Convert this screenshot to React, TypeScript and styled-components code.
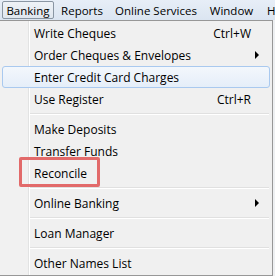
import { FC } from "react";
import styled, { createGlobalStyle } from "styled-components";

const GlobalStyle = createGlobalStyle`
  html, body {
    margin: 0;
    padding: 0;
    background: #eef0f2;
    font-family: "Open Sans", "Liberation Sans", sans-serif;
    font-size: 12px;
    color: #000;
  }
`;

const Page = styled.div`
  position: relative;
  width: 275px;
  height: 276px;
  overflow: hidden;
`;

const MenuBar = styled.div`
  display: flex;
  align-items: center;
  height: 20px;
  background: linear-gradient(#e7eef7, #dbe5f1);
  padding-left: 2px;
  font-size: 11.5px;
`;

interface BarItemProps {
  w: number;
  open?: boolean;
}

const BarItem = styled.div<BarItemProps>`
  box-sizing: border-box;
  width: ${({ w }) => w}px;
  flex-shrink: 0;
  height: 18px;
  display: flex;
  align-items: center;
  justify-content: ${({ w }) => (w < 20 ? "flex-start" : "center")};
  padding-left: ${({ w }) => (w < 20 ? "5px" : "0")};
  border: 1px solid ${({ open }) => (open ? "#8a96a3" : "transparent")};
  border-radius: 2px;
  background: ${({ open }) =>
    open ? "linear-gradient(#eef2f7, #e0e7ef)" : "transparent"};
  white-space: nowrap;
`;

const Menu = styled.div`
  box-sizing: border-box;
  width: 273px;
  border: 1px solid #979797;
  border-left: none;
  padding: 1px 0;
  display: flex;
  flex-direction: column;
  background: linear-gradient(
    to right,
    #f1f1f1 28px,
    #e2e3e3 28px,
    #e2e3e3 29px,
    #ffffff 29px,
    #ffffff 30px,
    #f0f0f0 30px
  );
`;

interface ItemProps {
  active?: boolean;
}

const Item = styled.div<ItemProps>`
  box-sizing: border-box;
  height: 22px;
  margin: 0 2px;
  padding: 0 18px 0 31px;
  display: flex;
  align-items: center;
  justify-content: space-between;
  border: 1px solid ${({ active }) => (active ? "#a9c9ef" : "transparent")};
  border-radius: 3px;
  background: ${({ active }) =>
    active ? "linear-gradient(#f3f7fc, #e5eef9)" : "transparent"};
  white-space: nowrap;
`;

const Shortcut = styled.span`
  padding-right: 0;
`;

const Arrow = styled.span`
  width: 0;
  height: 0;
  margin-right: -8px;
  border-top: 4px solid transparent;
  border-bottom: 4px solid transparent;
  border-left: 4px solid #000;
`;

const Separator = styled.div`
  height: 8px;
  margin: 0 3px 0 30px;
  display: flex;
  flex-direction: column;
  justify-content: center;

  &::before {
    content: "";
    display: block;
    height: 1px;
    background: #e0e0e0;
    border-bottom: 1px solid #ffffff;
  }
`;

const Callout = styled.div`
  position: absolute;
  left: 19px;
  top: 157px;
  width: 81px;
  height: 30px;
  box-sizing: border-box;
  border: 3px solid #e26a6a;
  border-radius: 2px;
  pointer-events: none;
`;

const App: FC = () => {
  return (
    <Page>
      <GlobalStyle />
      <MenuBar>
        <BarItem w={52} open>
          Banking
        </BarItem>
        <BarItem w={56}>Reports</BarItem>
        <BarItem w={92}>Online Services</BarItem>
        <BarItem w={59}>Window</BarItem>
        <BarItem w={14}>Help</BarItem>
      </MenuBar>
      <Menu>
        <Item>
          Write Cheques<Shortcut>Ctrl+W</Shortcut>
        </Item>
        <Item>
          Order Cheques &amp; Envelopes
          <Arrow />
        </Item>
        <Item active>Enter Credit Card Charges</Item>
        <Item>
          Use Register<Shortcut>Ctrl+R</Shortcut>
        </Item>
        <Separator />
        <Item>Make Deposits</Item>
        <Item>Transfer Funds</Item>
        <Item>Reconcile</Item>
        <Separator />
        <Item>
          Online Banking
          <Arrow />
        </Item>
        <Separator />
        <Item>Loan Manager</Item>
        <Separator />
        <Item>Other Names List</Item>
      </Menu>
      <Callout />
    </Page>
  );
};

export default App;
